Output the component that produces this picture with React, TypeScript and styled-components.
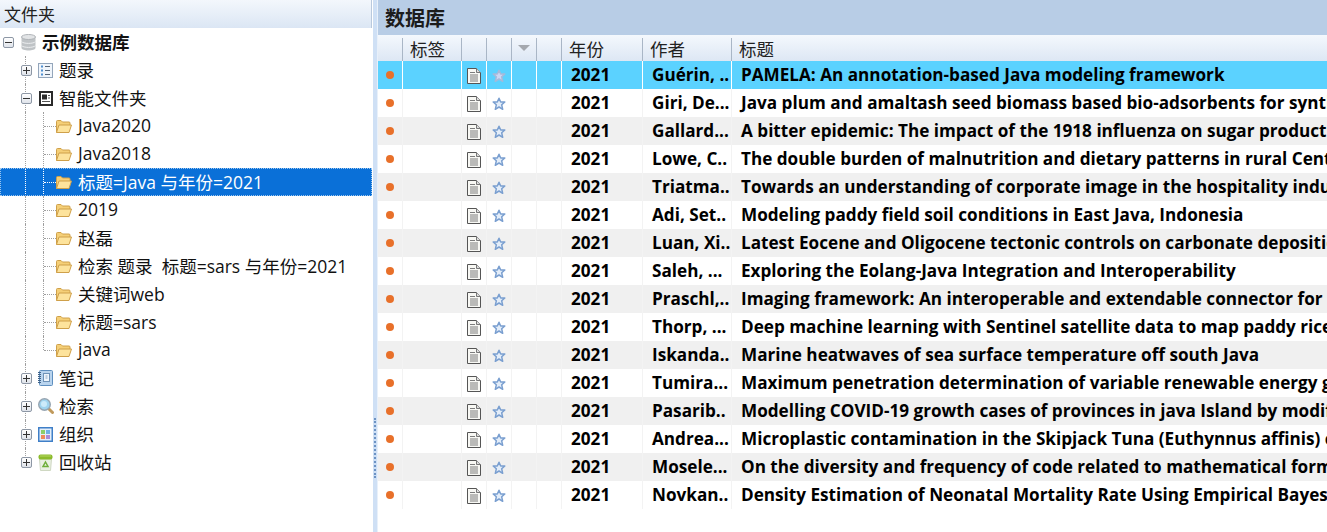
import React from "react"
import styled, { createGlobalStyle } from "styled-components"

const GlobalStyle = createGlobalStyle`
  html, body { margin: 0; padding: 0; height: 100%; overflow: hidden; background: #fff; }
  #root { height: 532px; }
`

const fontStack = `"Open Sans", "Noto Sans CJK SC", sans-serif`

const Page = styled.div`
  display: flex;
  width: 1327px;
  height: 532px;
  overflow: hidden;
  font-family: ${fontStack};
  color: #111;
`

const Sidebar = styled.aside`
  width: 372px;
  flex: none;
  display: flex;
  flex-direction: column;
`

const SidebarTitle = styled.div`
  height: 28px;
  box-sizing: border-box;
  padding-left: 4px;
  line-height: 29px;
  font-size: 17px;
  color: #222;
  background: linear-gradient(#f3f7fc, #dbe6f4);
  border-right: 1px solid #b9c9dd;
`

const Tree = styled.ul`
  list-style: none;
  margin: 0;
  padding: 0;
`

const TreeRow = styled.li<{ $selected?: boolean }>`
  display: flex;
  align-items: center;
  height: 28px;
  font-size: 17.5px;
  white-space: pre;
  background: ${(p) => (p.$selected ? "#0a70d8" : "transparent")};
  color: ${(p) => (p.$selected ? "#fff" : "#111")};
  outline: ${(p) => (p.$selected ? "1px dotted #9cc6ee" : "none")};
  outline-offset: -1px;
`

const Stem = styled.span<{ $selected?: boolean; $half?: boolean }>`
  flex: none;
  box-sizing: border-box;
  width: 0;
  height: ${(p) => (p.$half ? "50%" : "100%")};
  align-self: flex-start;
  border-left: 1px dotted ${(p) => (p.$selected ? "#fff" : "#a0a0a0")};
`

const Spacer = styled.span<{ $width: number }>`
  flex: none;
  width: ${(p) => p.$width}px;
`

const Tick = styled.span<{ $selected?: boolean }>`
  flex: none;
  width: 12px;
  height: 0;
  border-top: 1px dotted ${(p) => (p.$selected ? "#fff" : "#a0a0a0")};
`

const Expander = styled.span<{ $onStem?: boolean }>`
  flex: none;
  box-sizing: border-box;
  position: relative;
  width: 11px;
  height: 11px;
  margin-left: ${(p) => (p.$onStem ? "-5px" : "0")};
  border: 1px solid #8d97a5;
  border-radius: 2px;
  background: linear-gradient(#fff, #dfe3ea);
  &::before {
    content: "";
    position: absolute;
    left: 1px;
    right: 1px;
    top: 4px;
    height: 1px;
    background: #333;
  }
`

const Plus = styled(Expander)`
  &::after {
    content: "";
    position: absolute;
    top: 1px;
    bottom: 1px;
    left: 4px;
    width: 1px;
    background: #333;
  }
`

const NodeIcon = styled.svg`
  flex: none;
  display: block;
`

const NodeLabel = styled.span<{ $bold?: boolean }>`
  padding-bottom: 2px;
  font-weight: ${(p) => (p.$bold ? 700 : 400)};
`

const Splitter = styled.div`
  width: 6px;
  flex: none;
  position: relative;
  background: linear-gradient(to right, #fff 0, #fff 1px, #cfe0f5 1px, #cfe0f5 5px, #e8f0fa 5px);
  &::after {
    content: "";
    position: absolute;
    left: 2px;
    top: 418px;
    height: 60px;
    border-left: 2px dotted #6d93c4;
  }
`

const Main = styled.main`
  flex: 1;
  min-width: 0;
  display: flex;
  flex-direction: column;
`

const MainTitle = styled.div`
  height: 35px;
  flex: none;
  box-sizing: border-box;
  padding-left: 7px;
  line-height: 37px;
  font-size: 20px;
  font-weight: 700;
  color: #1c1c1c;
  background: #b8cde6;
`

const HeaderRow = styled.div`
  display: flex;
  height: 26px;
  flex: none;
  background: linear-gradient(#f4f8fd, #dde7f4);
`

const HeaderCell = styled.div<{ $width: number }>`
  flex: ${(p) => (p.$width ? `0 0 ${p.$width}px` : "1")};
  box-sizing: border-box;
  display: flex;
  align-items: center;
  justify-content: center;
  margin-top: 3px;
  padding-bottom: 3px;
  border-right: 1px solid #a9b6c6;
  &:last-child { border-right: 0; }
`

const HeaderText = styled(HeaderCell)`
  justify-content: flex-start;
  padding-left: 7px;
  font-size: 17.5px;
  color: #222;
`

const SortArrow = styled.span`
  width: 0;
  height: 0;
  border-left: 6px solid transparent;
  border-right: 6px solid transparent;
  border-top: 6px solid #a4a8ae;
`

const DataRow = styled.div<{ $selected: boolean; $odd: boolean }>`
  display: flex;
  height: 28px;
  flex: none;
  background: ${(p) => (p.$selected ? "#5bd2ff" : p.$odd ? "#f0f0f0" : "#fff")};
`

const Cell = styled.div<{ $width: number; $selected: boolean }>`
  flex: ${(p) => (p.$width ? `0 0 ${p.$width}px` : "1")};
  min-width: 0;
  box-sizing: border-box;
  display: flex;
  align-items: center;
  justify-content: center;
  border-right: 1px solid ${(p) => (p.$selected ? "#fff" : "#f3f3f3")};
  &:last-child { border-right: 0; }
`

const IconCell = styled(Cell)`
  padding-top: 2px;
`

const TextCell = styled(Cell)`
  justify-content: flex-start;
  padding-left: 9px;
  padding-bottom: 1px;
  font-size: 17.15px;
  font-weight: 700;
  color: #000;
  overflow: hidden;
  white-space: nowrap;
`

const Dot = styled.span`
  width: 8px;
  height: 8px;
  margin-right: 1px;
  border-radius: 50%;
  background: #e8702a;
`

const columns = [25, 59, 25, 25, 25, 25, 81, 89, 0]
const headers = ["", "标签", "", "", "", "", "年份", "作者", "标题"]

const records = [
  ["Guérin, ..", "PAMELA: An annotation-based Java modeling framework"],
  ["Giri, De...", "Java plum and amaltash seed biomass based bio-adsorbents for synthetic wastewater treatment"],
  ["Gallard...", "A bitter epidemic: The impact of the 1918 influenza on sugar production in Java"],
  ["Lowe, C..", "The double burden of malnutrition and dietary patterns in rural Central Java"],
  ["Triatma..", "Towards an understanding of corporate image in the hospitality industry"],
  ["Adi, Set..", "Modeling paddy field soil conditions in East Java, Indonesia"],
  ["Luan, Xi..", "Latest Eocene and Oligocene tectonic controls on carbonate deposition in Java"],
  ["Saleh, ...", "Exploring the Eolang-Java Integration and Interoperability"],
  ["Praschl,..", "Imaging framework: An interoperable and extendable connector for image libraries"],
  ["Thorp, ...", "Deep machine learning with Sentinel satellite data to map paddy rice production"],
  ["Iskanda..", "Marine heatwaves of sea surface temperature off south Java"],
  ["Tumira...", "Maximum penetration determination of variable renewable energy generation in Java"],
  ["Pasarib..", "Modelling COVID-19 growth cases of provinces in java Island by modified models"],
  ["Andrea...", "Microplastic contamination in the Skipjack Tuna (Euthynnus affinis) collected from Java"],
  ["Mosele...", "On the diversity and frequency of code related to mathematical formulas in Java"],
  ["Novkan..", "Density Estimation of Neonatal Mortality Rate Using Empirical Bayes in Java"],
]

const FolderIcon = () => (
  <NodeIcon width="16" height="13" viewBox="0 0 16 13">
    <path d="M0.500 12.500V1.500Q0.500 0.500 1.500 0.500H5L6.500 2H13Q14 2 14 3V5" fill="#f5cf77" stroke="#cfa04a" />
    <path d="M0.500 12.500L3 5H15.500L13 12.500Z" fill="#fde39c" stroke="#cfa04a" strokeLinejoin="round" />
  </NodeIcon>
)

const DatabaseIcon = () => (
  <NodeIcon width="15" height="17" viewBox="0 0 15 17">
    <path d="M0.500 3V14C0.500 15.500 4 16.500 7.500 16.500S14.500 15.500 14.500 14V3Z" fill="#bfc3c6" />
    <ellipse cx="7.500" cy="3" rx="7" ry="2.500" fill="#e2e4e6" stroke="#b0b4b8" />
    <path d="M0.500 7.500C2 10 13 10 14.500 7.500M0.500 11.500C2 14 13 14 14.500 11.500" fill="none" stroke="#eceef0" />
  </NodeIcon>
)

const ListIcon = () => (
  <NodeIcon width="15" height="15" viewBox="0 0 15 15">
    <rect x="0.500" y="0.500" width="14" height="14" fill="#f0f5fb" stroke="#94a6bb" />
    <path d="M7 3.500H12M7 7.500H12M7 11.500H12" stroke="#566577" />
    <path d="M3 3.500H5M3 7.500H5M3 11.500H5" stroke="#4f8fd0" strokeWidth="2" />
  </NodeIcon>
)

const SmartIcon = () => (
  <NodeIcon width="15" height="15" viewBox="0 0 15 15">
    <rect x="2" y="1" width="12" height="13" fill="#fff" stroke="#2a2a2a" strokeWidth="2" />
    <rect x="4" y="3.500" width="5" height="5" fill="#2a2a2a" />
    <path d="M10 4.500H12M10 7H12M4 10.500H12" stroke="#555" />
  </NodeIcon>
)

const NoteIcon = () => (
  <NodeIcon width="15" height="16" viewBox="0 0 15 16">
    <rect x="1.500" y="0.500" width="13" height="15" rx="1" fill="#b9d4ee" stroke="#5f8fbf" />
    <rect x="5.500" y="3.500" width="6" height="8" fill="#eef5fc" stroke="#6f93b8" />
    <path d="M7.500 6H9.500M7.500 8H9.500" stroke="#8aa6c2" />
    <path d="M0 2.500H3M0 4.500H3M0 6.500H3M0 8.500H3M0 10.500H3M0 12.500H3" stroke="#3f6288" />
  </NodeIcon>
)

const SearchIcon = () => (
  <NodeIcon width="16" height="16" viewBox="0 0 16 16">
    <path d="M11 11L14.500 14.500" stroke="#c09a5c" strokeWidth="3" strokeLinecap="round" />
    <circle cx="6.500" cy="6.500" r="5.800" fill="#9fd4ef" stroke="#97a5b1" strokeWidth="1.400" />
    <circle cx="6" cy="6" r="3" fill="#cdebfa" />
  </NodeIcon>
)

const OrganizeIcon = () => (
  <NodeIcon width="15" height="15" viewBox="0 0 15 15">
    <rect x="0.750" y="0.750" width="13.500" height="13.500" fill="#e4effa" stroke="#3f7fc8" strokeWidth="1.500" />
    <rect x="3" y="3" width="4" height="4" fill="#8ccf6a" />
    <rect x="8" y="3" width="4" height="4" fill="#6fb1e6" />
    <rect x="3" y="8" width="4" height="4" fill="#ef8a5a" />
    <rect x="8" y="8" width="4" height="4" fill="#a98bd8" />
  </NodeIcon>
)

const TrashIcon = () => (
  <NodeIcon width="15" height="17" viewBox="0 0 15 17">
    <path d="M1.500 5L2.500 16.500H12.500L13.500 5Z" fill="#eaf0e2" stroke="#cfd8c2" />
    <rect x="0.500" y="0.500" width="14" height="5" rx="2" fill="#8cbb2c" />
    <path d="M2 2H13" stroke="#b5d765" />
    <path d="M7.500 8L10 12.500H5Z" fill="none" stroke="#6fae3a" strokeWidth="1.500" />
  </NodeIcon>
)

const DocIcon = () => (
  <NodeIcon width="14" height="16" viewBox="0 0 14 16">
    <path d="M0.500 0.500H9.500L13.500 4.500V15.500H0.500Z" fill="#f8f8f4" stroke="#555" />
    <path d="M9.500 0.500V4.500H13.500" fill="#ddd" stroke="#777" />
    <path d="M3 4.500H8M3 7H11M3 9H11M3 11H11M3 13H11" stroke="#7c7c7c" />
  </NodeIcon>
)

const StarIcon = ({ selected }: { selected: boolean }) => (
  <NodeIcon width="14" height="14" viewBox="0 0 14 14">
    <path
      d="M7 1.200L8.700 5H12.800L9.700 7.800L10.700 12.300L7 10L3.300 12.300L4.300 7.800L1.200 5H5.300Z"
      fill={selected ? "#ccd6f2" : "#e3edf9"}
      stroke={selected ? "#a5b9da" : "#7a9fd0"}
      strokeWidth="1.500"
      strokeLinejoin="round"
    />
  </NodeIcon>
)

const IconSlot = styled.span<{ $width: number }>`
  flex: none;
  display: flex;
  align-items: center;
  width: ${(p) => p.$width}px;
`

const Branch = ({ icon, label, open, last }: { icon: React.ReactNode; label: string; open?: boolean; last?: boolean }) => (
  <TreeRow>
    <Spacer $width={25} />
    <Stem $half={last} />
    {open ? <Expander $onStem /> : <Plus $onStem />}
    <Spacer $width={6} />
    <IconSlot $width={21}>{icon}</IconSlot>
    <NodeLabel>{label}</NodeLabel>
  </TreeRow>
)

const Leaf = ({ label, selected, last }: { label: string; selected?: boolean; last?: boolean }) => (
  <TreeRow $selected={selected}>
    <Spacer $width={25} />
    <Stem $selected={selected} />
    <Spacer $width={17} />
    <Stem $selected={selected} $half={last} />
    <Tick $selected={selected} />
    <IconSlot $width={22}>
      <FolderIcon />
    </IconSlot>
    <NodeLabel>{label}</NodeLabel>
  </TreeRow>
)

const leaves = ["Java2020", "Java2018", "标题=Java 与年份=2021", "2019", "赵磊", "检索 题录  标题=sars 与年份=2021", "关键词web", "标题=sars", "java"]

export default function App() {
  return (
    <Page>
      <GlobalStyle />
      <Sidebar>
        <SidebarTitle>文件夹</SidebarTitle>
        <Tree>
          <TreeRow>
            <Spacer $width={3} />
            <Expander />
            <Spacer $width={7} />
            <IconSlot $width={21}>
              <DatabaseIcon />
            </IconSlot>
            <NodeLabel $bold>示例数据库</NodeLabel>
          </TreeRow>
          <Branch icon={<ListIcon />} label="题录" />
          <Branch icon={<SmartIcon />} label="智能文件夹" open />
          {leaves.map((label, index) => (
            <Leaf key={label} label={label} selected={index === 2} last={index === leaves.length - 1} />
          ))}
          <Branch icon={<NoteIcon />} label="笔记" />
          <Branch icon={<SearchIcon />} label="检索" />
          <Branch icon={<OrganizeIcon />} label="组织" />
          <Branch icon={<TrashIcon />} label="回收站" last />
        </Tree>
      </Sidebar>
      <Splitter />
      <Main>
        <MainTitle>数据库</MainTitle>
        <HeaderRow>
          {columns.map((width, index) =>
            headers[index] ? (
              <HeaderText key={index} $width={width}>{headers[index]}</HeaderText>
            ) : (
              <HeaderCell key={index} $width={width}>{index === 4 && <SortArrow />}</HeaderCell>
            )
          )}
        </HeaderRow>
        {records.map(([author, title], index) => {
          const selected = index === 0
          const cellProps = { $selected: selected }
          return (
            <DataRow key={title} $selected={selected} $odd={index % 2 === 0}>
              <Cell $width={columns[0]} {...cellProps}><Dot /></Cell>
              <Cell $width={columns[1]} {...cellProps} />
              <IconCell $width={columns[2]} {...cellProps}><DocIcon /></IconCell>
              <IconCell $width={columns[3]} {...cellProps}><StarIcon selected={selected} /></IconCell>
              <Cell $width={columns[4]} {...cellProps} />
              <Cell $width={columns[5]} {...cellProps} />
              <TextCell $width={columns[6]} {...cellProps}>2021</TextCell>
              <TextCell $width={columns[7]} {...cellProps}>{author}</TextCell>
              <TextCell $width={columns[8]} {...cellProps}>{title}</TextCell>
            </DataRow>
          )
        })}
      </Main>
    </Page>
  )
}
